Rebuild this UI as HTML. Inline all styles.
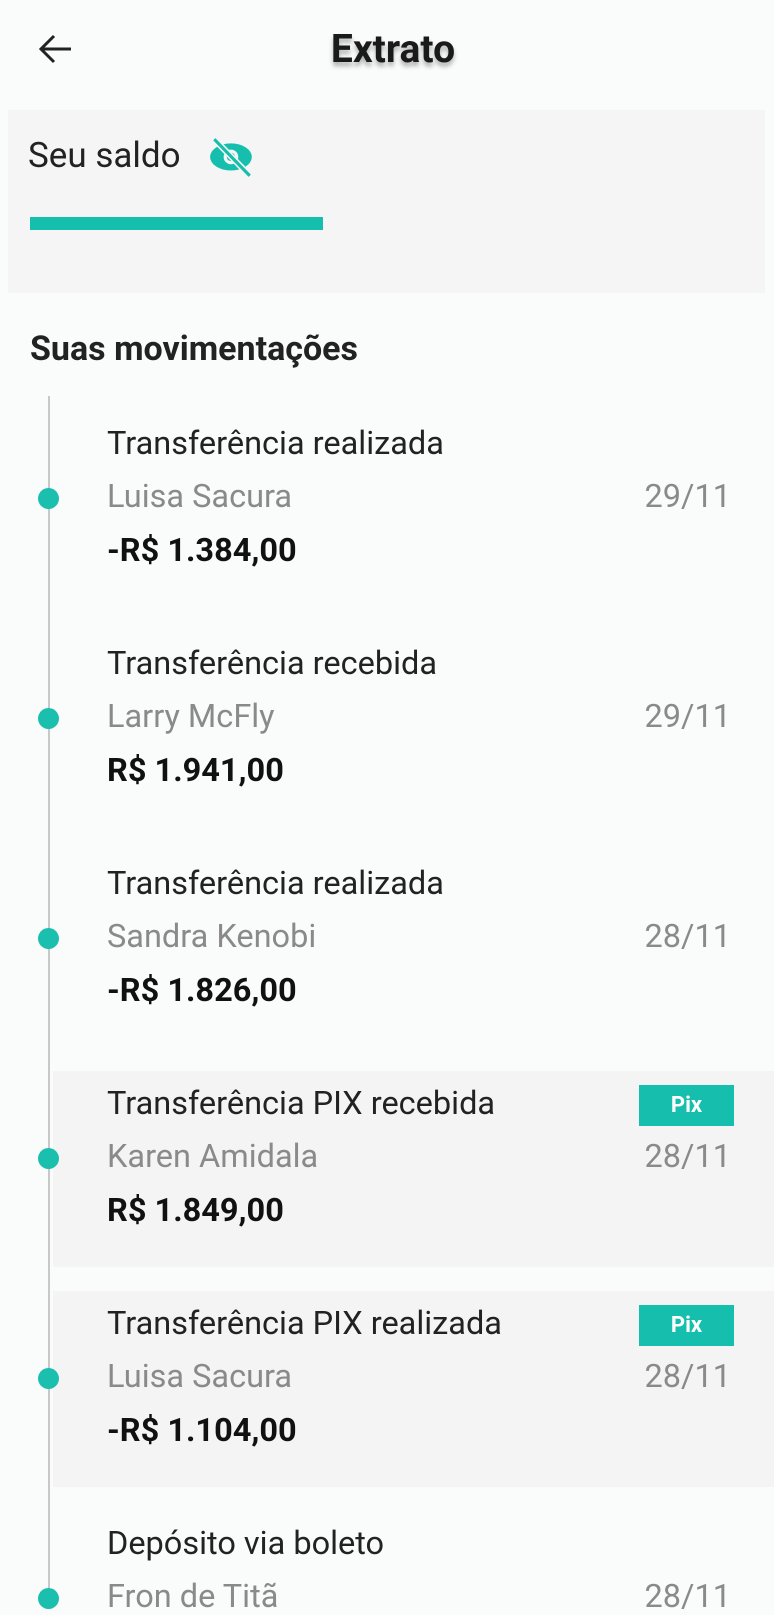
<!DOCTYPE html>
<html><head><meta charset="utf-8"><style>
*{margin:0;padding:0;box-sizing:border-box}
body{width:774px;height:1600px;overflow:hidden;background:#fafbfb;font-family:"Roboto","Liberation Sans",sans-serif;color:#1c1c1c;position:relative}
.a{position:absolute;white-space:nowrap;line-height:1}
.t{font-size:32.5px;color:#222}
.n{font-size:32.5px;color:#8a8a8a}
.m{font-size:32.5px;font-weight:bold;color:#111}
.d{font-size:32.5px;color:#8a8a8a;right:43px}
.dot{position:absolute;left:38px;width:21px;height:21px;border-radius:50%;background:#1abfae}
.bg{position:absolute;left:53px;right:0;height:196px;background:#f4f4f4}
.pix{position:absolute;left:639px;width:95px;height:41px;background:#16bfad;color:#fff;font-weight:bold;font-size:22px;text-align:center;line-height:41px}
</style></head><body>
<svg class="a" style="left:37px;top:33px" width="36" height="32" viewBox="0 0 36 32"><path d="M34 16H5M17 3L4 16l13 13" fill="none" stroke="#222" stroke-width="3"/></svg>
<div class="a" style="left:0;width:774px;text-align:center;top:30px;padding-left:12px;font-size:39px;font-weight:bold;color:#1a1a1a;text-shadow:0 4px 5px rgba(0,0,0,.3)">Extrato</div>
<div class="a" style="left:8px;top:110px;width:757px;height:183px;background:#f5f5f5"></div>
<div class="a" style="left:28px;top:138px;font-size:35px;color:#222">Seu saldo</div>
<svg class="a" style="left:208px;top:137px" width="48" height="42" viewBox="0 0 46 40"><ellipse cx="22" cy="19" rx="20" ry="13" fill="#16bfad"/><circle cx="22" cy="19" r="7" fill="#f5f5f5"/><circle cx="22" cy="19" r="4" fill="#16bfad"/><path d="M6 2L40 37" stroke="#f5f5f5" stroke-width="6"/><path d="M6 2L40 37" stroke="#16bfad" stroke-width="3"/></svg>
<div class="a" style="left:30px;top:217px;width:293px;height:13px;background:#16bfad"></div>
<div class="a" style="left:30px;top:332px;font-size:34px;font-weight:bold;color:#222">Suas movimentações</div>
<div class="bg" style="top:1071px"></div>
<div class="bg" style="top:1291px"></div>
<div class="a" style="left:48px;top:396px;width:2px;height:1204px;background:#c8c8c8"></div>

<div class="dot" style="top:488px"></div>
<div class="a t" style="left:107px;top:427px">Transferência realizada</div>
<div class="a n" style="left:107px;top:480px">Luisa Sacura</div>
<div class="a d" style="top:480px">29/11</div>
<div class="a m" style="left:107px;top:534px">-R$ 1.384,00</div>

<div class="dot" style="top:708px"></div>
<div class="a t" style="left:107px;top:647px">Transferência recebida</div>
<div class="a n" style="left:107px;top:700px">Larry McFly</div>
<div class="a d" style="top:700px">29/11</div>
<div class="a m" style="left:107px;top:754px">R$ 1.941,00</div>

<div class="dot" style="top:928px"></div>
<div class="a t" style="left:107px;top:867px">Transferência realizada</div>
<div class="a n" style="left:107px;top:920px">Sandra Kenobi</div>
<div class="a d" style="top:920px">28/11</div>
<div class="a m" style="left:107px;top:974px">-R$ 1.826,00</div>

<div class="dot" style="top:1148px"></div>
<div class="a t" style="left:107px;top:1087px">Transferência PIX recebida</div>
<div class="pix" style="top:1085px">Pix</div>
<div class="a n" style="left:107px;top:1140px">Karen Amidala</div>
<div class="a d" style="top:1140px">28/11</div>
<div class="a m" style="left:107px;top:1194px">R$ 1.849,00</div>

<div class="dot" style="top:1368px"></div>
<div class="a t" style="left:107px;top:1307px">Transferência PIX realizada</div>
<div class="pix" style="top:1305px">Pix</div>
<div class="a n" style="left:107px;top:1360px">Luisa Sacura</div>
<div class="a d" style="top:1360px">28/11</div>
<div class="a m" style="left:107px;top:1414px">-R$ 1.104,00</div>

<div class="dot" style="top:1588px"></div>
<div class="a t" style="left:107px;top:1527px">Depósito via boleto</div>
<div class="a n" style="left:107px;top:1580px">Fron de Titã</div>
<div class="a d" style="top:1580px">28/11</div>
</body></html>
